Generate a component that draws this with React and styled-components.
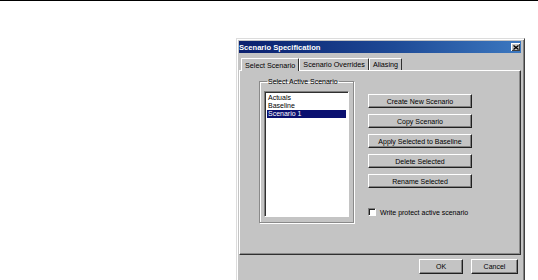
import React, { useState } from "react";
import styled, { createGlobalStyle } from "styled-components";

const GlobalStyle = createGlobalStyle`
  html, body {
    margin: 0;
    background: #ffffff;
    font-family: "Liberation Sans", Arial, sans-serif;
  }
`;

const Page = styled.div`
  height: 280px;
  overflow: hidden;
  border-top: 1px solid #000;
  box-sizing: border-box;
  padding: 37px 0 0 236px;
`;

const Dialog = styled.div`
  width: 289px;
  height: 250px;
  box-sizing: border-box;
  background: #c4c4c4;
  border-top: 1px solid #dcdcdc;
  border-left: 1px solid #dcdcdc;
  border-right: 1px solid #404040;
  border-bottom: 1px solid #404040;
  box-shadow: inset 1px 1px 0 #ffffff, inset -1px -1px 0 #808080;
  padding: 2px 3px 0 2px;
  display: flex;
  flex-direction: column;
`;

const TitleBar = styled.div`
  height: 12px;
  display: flex;
  align-items: center;
  justify-content: space-between;
  padding: 0 1px 0 0;
  background: linear-gradient(90deg, #0a1f6e 0%, #1e4a96 55%, #3c78c0 100%);
  color: #fff;
  font-weight: bold;
  font-size: 7.6px;
`;

const CloseBox = styled.div`
  width: 9px;
  height: 8px;
  background: #c4c4c4;
  box-shadow: inset 1px 1px 0 #fff, inset -1px -1px 0 #404040;
  display: flex;
  align-items: center;
  justify-content: center;
`;

const TabRow = styled.div`
  display: flex;
  align-items: flex-end;
  margin: 4px 0 0 2px;
  height: 13px;
`;

const TabTitle = styled.div`
  font-size: 7.2px;
  color: #000;
  padding: 0 3px;
  height: ${p => (p.$active ? 13 : 12)}px;
  line-height: ${p => (p.$active ? 13 : 12)}px;
  border-left: 1px solid #fff;
  border-top: 1px solid #fff;
  border-right: 1px solid #303030;
  border-radius: 1px 1px 0 0;
  box-sizing: border-box;
  white-space: nowrap;
  background: #c4c4c4;
  position: relative;
  margin-bottom: ${p => (p.$active ? -1 : 0)}px;
  z-index: ${p => (p.$active ? 1 : 0)};
`;

const Panel = styled.div`
  height: 185px;
  box-sizing: border-box;
  border-top: 1px solid #fff;
  border-left: 1px solid #fff;
  border-right: 1px solid #303030;
  border-bottom: 1px solid #303030;
  box-shadow: inset -1px -1px 0 #8a8a8a;
  display: flex;
  align-items: flex-start;
  padding: 7px 0 0 19px;
  gap: 14px;
`;

const GroupBox = styled.fieldset`
  margin: 0;
  width: 95px;
  height: 145px;
  box-sizing: border-box;
  border: 1px solid #8a8a8a;
  box-shadow: 1px 1px 0 #fff, inset 1px 1px 0 #fff;
  padding: 6px 4px 5px 4px;
  display: flex;
  flex-direction: column;
  legend {
    font-size: 7px;
    padding: 0 1px;
    margin-left: 3px;
    color: #000;
  }
`;

const ListBox = styled.div`
  flex: 1;
  background: #fff;
  border-top: 1px solid #808080;
  border-left: 1px solid #808080;
  border-right: 1px solid #fff;
  border-bottom: 1px solid #fff;
  box-shadow: inset 1px 1px 0 #303030;
  padding: 2px 2px;
  display: flex;
  flex-direction: column;
`;

const ListItem = styled.div`
  font-size: 7px;
  line-height: 8px;
  height: 8px;
  padding-left: 1px;
  color: ${p => (p.$selected ? "#fff" : "#000")};
  background: ${p => (p.$selected ? "#0a1070" : "transparent")};
`;

const ButtonColumn = styled.div`
  display: flex;
  flex-direction: column;
  gap: 6px;
  padding-top: 16px;
`;

const Button = styled.div`
  width: ${p => p.$w || 104}px;
  height: ${p => p.$h || 14}px;
  box-sizing: border-box;
  background: #c4c4c4;
  border-top: 1px solid #fff;
  border-left: 1px solid #fff;
  border-right: 1px solid #202020;
  border-bottom: 1px solid #202020;
  box-shadow: inset -1px -1px 0 #808080;
  font-size: 7px;
  color: #000;
  display: flex;
  align-items: center;
  justify-content: center;
  white-space: nowrap;
`;

const CheckRow = styled.label`
  display: flex;
  align-items: center;
  gap: 4px;
  margin-top: 14px;
  font-size: 7px;
  color: #000;
`;

const CheckBox = styled.div`
  width: 8px;
  height: 8px;
  box-sizing: border-box;
  background: #fff;
  border-top: 1px solid #808080;
  border-left: 1px solid #808080;
  border-right: 1px solid #fff;
  border-bottom: 1px solid #fff;
  box-shadow: inset 1px 1px 0 #202020;
`;

const Footer = styled.div`
  display: flex;
  justify-content: flex-end;
  gap: 8px;
  padding: 4px 3px 0 0;
`;

export default function App() {
  const [selected, setSelected] = useState(2);
  const items = ["Actuals", "Baseline", "Scenario 1"];
  const actions = [
    "Create New Scenario",
    "Copy Scenario",
    "Apply Selected to Baseline",
    "Delete Selected",
    "Rename  Selected",
  ];

  return (
    <Page>
      <GlobalStyle />
      <Dialog>
        <TitleBar>
          <span>Scenario Specification</span>
          <CloseBox>
            <svg width="6" height="5" viewBox="0 0 6 5">
              <path d="M0.5 0.5 L5.5 4.5 M5.5 0.5 L0.5 4.5" stroke="#000" strokeWidth="1.3" />
            </svg>
          </CloseBox>
        </TitleBar>

        <TabRow>
          <TabTitle $active>Select Scenario</TabTitle>
          <TabTitle>Scenario Overrides</TabTitle>
          <TabTitle>Aliasing</TabTitle>
        </TabRow>

        <Panel>
          <GroupBox>
            <legend>Select Active Scenario</legend>
            <ListBox>
              {items.map((it, i) => (
                <ListItem key={it} $selected={i === selected} onClick={() => setSelected(i)}>
                  {it}
                </ListItem>
              ))}
            </ListBox>
          </GroupBox>

          <ButtonColumn>
            {actions.map(a => (
              <Button key={a}>{a}</Button>
            ))}
            <CheckRow>
              <CheckBox />
              Write protect active scenario
            </CheckRow>
          </ButtonColumn>
        </Panel>

        <Footer>
          <Button $w={44} $h={15}>OK</Button>
          <Button $w={47} $h={15}>Cancel</Button>
        </Footer>
      </Dialog>
    </Page>
  );
}
